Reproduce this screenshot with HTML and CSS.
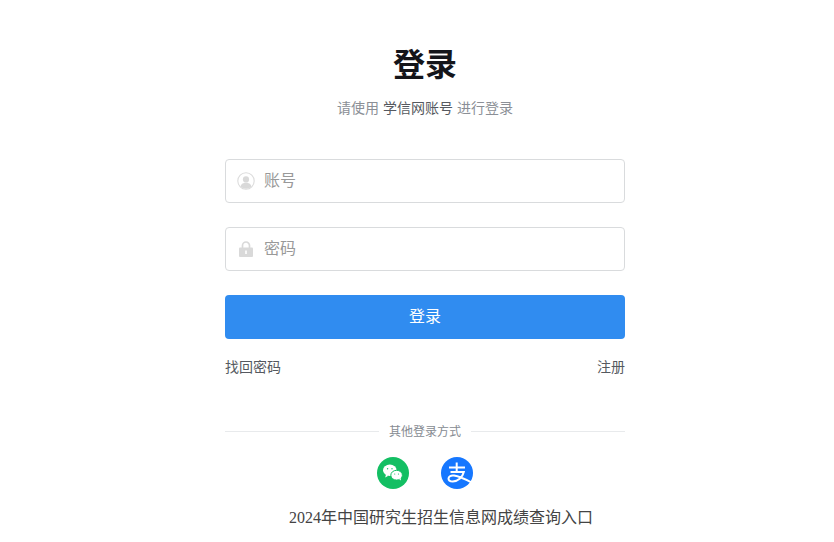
FILE: index.html
```html
<!DOCTYPE html>
<html lang="zh-CN">
<head>
  <meta charset="UTF-8" />
  <meta name="viewport" content="width=device-width, initial-scale=1.0"/>
  <title>登录</title>
  <link rel="stylesheet" href="styles.css">
</head>
<body>
  <div class="login-box">
    <h2>登录</h2>
    <p class="sub">请使用 <span>学信网账号</span> 进行登录</p>

    <!-- Login form -->
    <form class="login-form">
      <div class="form-group">
        <svg class="field-icon" width="18" height="18" viewBox="0 0 18 18">
          <circle cx="9" cy="9" r="8.2" fill="#fff" stroke="#dcdcdc" stroke-width="1.100"/>
          <circle cx="9" cy="7.400" r="3.100" fill="#d9d9d9"/>
          <path d="M3.400 14.400c.8-2.600 3-3.700 5.600-3.700s4.800 1.100 5.600 3.700a8 8 0 0 1-11.200 0z" fill="#d9d9d9"/>
        </svg>
        <input type="text" placeholder="账号" />
      </div>
      <div class="form-group">
        <svg class="field-icon" width="18" height="18" viewBox="0 0 18 18">
          <path d="M5.500 8V5.500a3.500 3.500 0 0 1 7 0V8" fill="none" stroke="#d9d9d9" stroke-width="1.700"/>
          <rect x="2" y="7.500" width="14" height="9.500" rx="1" fill="#d9d9d9"/>
          <rect x="8.200" y="10.500" width="1.600" height="3.500" fill="#fff"/>
        </svg>
        <input type="password" placeholder="密码" class="pw" />
      </div>
      <button type="button" class="login-btn">登录</button>
    </form>

    <div class="links">
      <a>找回密码</a>
      <a>注册</a>
    </div>

    <div class="other-title"><span>其他登录方式</span></div>

    <div class="other-icons">
      <svg width="32" height="32" viewBox="0 0 32 32">
        <circle cx="16" cy="16" r="16" fill="#13bf63"/>
        <ellipse cx="12.800" cy="13.300" rx="6.800" ry="5.700" fill="#fff"/>
        <path d="M9 17.500l-.8 3 3.200-1.800z" fill="#fff"/>
        <ellipse cx="19.600" cy="18.200" rx="5.800" ry="4.900" stroke="#13bf63" stroke-width="1" fill="#fff"/>
        <path d="M22 22l2 1.600-.4-2.800z" fill="#fff"/>
        <circle cx="10.600" cy="11.800" r=".7" fill="#13bf63"/>
        <circle cx="15" cy="11.800" r=".7" fill="#13bf63"/>
        <circle cx="17.700" cy="17" r=".6" fill="#13bf63"/>
        <circle cx="21.500" cy="17" r=".6" fill="#13bf63"/>
      </svg>
      <svg width="32" height="32" viewBox="0 0 32 32">
        <circle cx="16" cy="16" r="16" fill="#1677ff"/>
        <path d="M8 10.500h16M15.700 5.500v9.500M9.500 15h13.300c-1.300 5.500-6 9.500-11 9.500-2.800 0-4.300-1.300-4.300-3 0-2.200 2.500-3.400 5.500-2.900 5 .8 11 3.500 17.800 7" fill="none" stroke="#fff" stroke-width="2"/>
      </svg>
    </div>

    <p class="entry">2024年中国研究生招生信息网成绩查询入口</p>
  </div>
</body>
</html>
```

FILE: styles.css
```css
* {
  box-sizing: border-box;
}

body {
  margin: 0;
  background: #fff;
  font-family: "Liberation Sans", "Noto Sans CJK SC", sans-serif;
  color: #333;
}

.login-box {
  width: 400px;
  margin-left: 225px;
  padding-top: 42px;
}

h2 {
  margin: 0;
  text-align: center;
  font-size: 32px;
  line-height: 46px;
  font-weight: bold;
  color: #14151a;
}

.sub {
  margin: 10px 0 0;
  text-align: center;
  font-size: 14px;
  line-height: 20px;
  color: #8b8f96;
}

.sub span {
  color: #555960;
}

.login-form {
  margin-top: 41px;
}

.form-group {
  display: flex;
  align-items: center;
  gap: 9px;
  height: 44px;
  margin-bottom: 24px;
  padding: 0 11px;
  border: 1px solid #d9dbdd;
  border-radius: 4px;
}

.field-icon {
  flex: none;
}

input {
  flex: 1;
  min-width: 0;
  border: none;
  outline: none;
  padding: 0;
  font-family: inherit;
  font-size: 16px;
}

input::placeholder {
  color: #999;
}

.login-btn {
  display: block;
  width: 100%;
  height: 44px;
  padding: 0 0 5px;
  border: none;
  border-radius: 4px;
  background: #308cf0;
  color: #fff;
  font-family: inherit;
  font-size: 16px;
  cursor: pointer;
}

.links {
  display: flex;
  justify-content: space-between;
  margin-top: 18px;
  font-size: 14px;
  line-height: 20px;
  color: #555960;
}

.other-title {
  display: flex;
  align-items: center;
  gap: 10px;
  margin-top: 45px;
  font-size: 12px;
  line-height: 20px;
  color: #868b92;
}

.other-title::before,
.other-title::after {
  content: "";
  flex: 1;
  height: 1px;
  margin-bottom: 2px;
  background: #e8eaec;
}

.other-icons {
  display: flex;
  justify-content: center;
  gap: 32px;
  margin-top: 15px;
}

.other-icons svg {
  display: block;
}

.entry {
  margin: 18px 0 0;
  text-align: center;
  text-indent: 2em;
  font-family: "Liberation Serif", "Noto Sans CJK SC", serif;
  font-size: 16px;
  line-height: 22px;
  color: #444;
}
```
